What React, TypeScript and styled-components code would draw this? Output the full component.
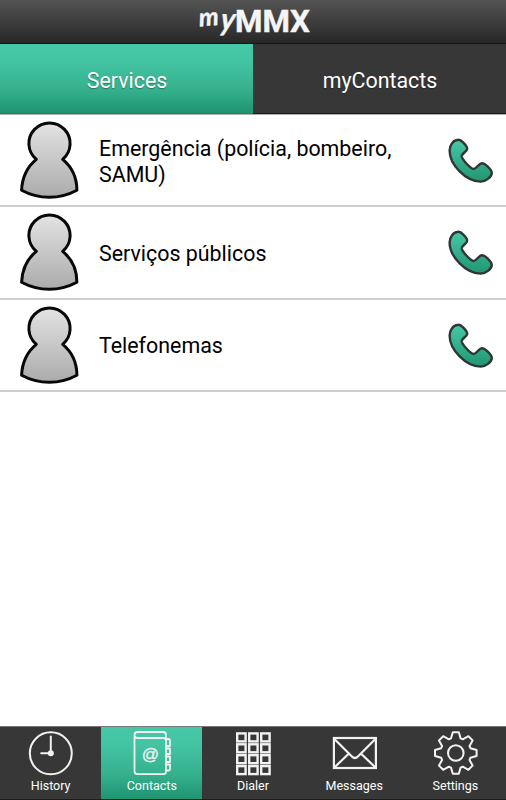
import React from "react";
import styled, { createGlobalStyle, css } from "styled-components";

const GlobalStyle = createGlobalStyle`
  * { box-sizing: border-box; }
  body { margin: 0; background: #fff; font-family: Roboto, "Liberation Sans", sans-serif; }
`;

const green = css`
  background: linear-gradient(#46c8a6 0%, #43c4a2 25%, #36b18e 65%, #1f9471 100%);
`;

const Screen = styled.div`
  display: flex;
  flex-direction: column;
  width: 100%;
  height: 800px;
  background: #fff;
  overflow: hidden;
`;

const Header = styled.header`
  display: flex;
  justify-content: center;
  height: 44px;
  flex: none;
  background: linear-gradient(#545454, #272727);
  border-bottom: 1px solid #151515;
`;

const Logo = styled.svg`
  display: block;
  width: 120px;
  height: 43px;
  overflow: visible;
`;

const Tabs = styled.nav`
  display: flex;
  height: 70px;
  flex: none;
`;

const Tab = styled.button<{ $active?: boolean }>`
  flex: 1 1 0;
  border: 0;
  border-bottom: 1px solid ${(p) => (p.$active ? "#1b8768" : "#1c1c1c")};
  padding: 3px 0 0 1px;
  font: 400 21.4px Roboto, sans-serif;
  color: #fff;
  text-shadow: 0 1px 1px rgba(0, 0, 0, 0.35);
  background: #373737;
  ${(p) => p.$active && green}
`;

const List = styled.ul`
  flex: 1;
  margin: 0;
  padding: 0;
  list-style: none;
  border-top: 1px solid #b0b0b0;
`;

const Row = styled.li`
  display: flex;
  align-items: center;
  height: 92.3px;
  padding: 0 11px 0 18px;
  border-bottom: 2px solid #cfcfcf;
`;

const Avatar = styled.svg`
  flex: none;
  width: 63px;
  height: 80px;
  margin-top: 2px;
`;

const Name = styled.span`
  flex: 1;
  margin-left: 18px;
  padding-top: 3px;
  font-size: 21.4px;
  line-height: 26px;
  color: #000;
`;

const Call = styled.svg`
  flex: none;
  width: 48px;
  height: 48px;
  margin-top: 2px;
`;

const BottomBar = styled.nav`
  display: flex;
  height: 74px;
  flex: none;
  border-top: 1px solid #777;
  border-bottom: 1px solid #1b1b1b;
  background: #373737;
`;

const BarItem = styled.button<{ $active?: boolean }>`
  flex: 1 1 0;
  display: flex;
  flex-direction: column;
  align-items: center;
  border: 0;
  padding: 3px 0 0;
  color: #fff;
  font: 400 12.5px/16px Roboto, sans-serif;
  background: transparent;
  ${(p) => p.$active && green}
`;

const BarIcon = styled.svg<{ $weight?: number; $sharp?: boolean }>`
  display: block;
  width: 48px;
  height: 46px;
  margin-bottom: 2px;
  fill: none;
  stroke: #f2f2f2;
  stroke-width: ${(p) => p.$weight ?? 2};
  stroke-linejoin: ${(p) => (p.$sharp ? "miter" : "round")};
  stroke-linecap: round;
`;

const Solid = styled.circle`
  fill: #f2f2f2;
  stroke: none;
`;

const AtSign = styled.text`
  fill: #f2f2f2;
  stroke: #f2f2f2;
  stroke-width: 0.3;
  font: 400 17px "Liberation Sans", sans-serif;
  text-anchor: middle;
`;

const gearPath = (() => {
  const points: string[] = [];
  const profile: [number, number][] = [
    [14.6, -4.8],
    [20.8, -3],
    [20.8, 3],
    [14.6, 4.8],
  ];
  for (let i = 0; i < 8; i++) {
    const a = (i * Math.PI) / 4;
    profile.forEach(([r, t]) => {
      const x = 24.8 + r * Math.cos(a) - t * Math.sin(a);
      const y = 23 + r * Math.sin(a) + t * Math.cos(a);
      points.push(`${x.toFixed(2)} ${y.toFixed(2)}`);
    });
  }
  return `M${points.join("L")}Z`;
})();

const HistoryIcon = () => (
  <BarIcon viewBox="0 0 48 46">
    <circle cx="23.8" cy="23.3" r="21" />
    <path d="M23.8 6.5V23.3H14.2" />
    <Solid cx="23.8" cy="23.3" r="3" />
  </BarIcon>
);

const ContactsIcon = () => (
  <BarIcon viewBox="0 0 48 46" $weight={1.8}>
    <path d="M6.5 5V41Q6.5 44.2 9.5 44.2H35.5Q38 44.2 38 41.5V10.5Q38 8 35.5 8H9.5Q6.5 8 6.5 5Q6.5 2 9.5 2H35.5Q38 2 38 5V9" />
    <path d="M38 9H40.5Q42 9 42 10.5V16H39M39 18.5H42V24H39M39 26.5H42V32H39M39 34.5H42V39Q42 40.5 40.5 40.5H39" />
    <AtSign x="22.3" y="30.3">@</AtSign>
  </BarIcon>
);

const DialerIcon = () => (
  <BarIcon viewBox="0 0 48 46" $weight={2.4} $sharp>
    {[0, 1, 2, 3].map((r) =>
      [0, 1, 2].map((c) => (
        <rect key={`${r}-${c}`} x={8.2 + c * 12} y={3.4 + r * 10.9} width="8.4" height="8" />
      ))
    )}
  </BarIcon>
);

const MessagesIcon = () => (
  <BarIcon viewBox="0 0 48 46" $weight={2.2} $sharp>
    <rect x="3.9" y="8" width="42" height="30" />
    <path d="M4.4 9L21.9 26.5Q24.9 29.5 27.9 26.5L45.4 9M4.9 37L18.4 24M44.9 37L31.4 24" />
  </BarIcon>
);

const SettingsIcon = () => (
  <BarIcon viewBox="0 0 48 46">
    <path d={gearPath} />
    <circle cx="24.8" cy="23" r="7.8" />
  </BarIcon>
);

const services = ["Emergência (polícia, bombeiro, SAMU)", "Serviços públicos", "Telefonemas"];

const items = [
  { label: "History", Icon: HistoryIcon },
  { label: "Contacts", Icon: ContactsIcon, active: true },
  { label: "Dialer", Icon: DialerIcon },
  { label: "Messages", Icon: MessagesIcon },
  { label: "Settings", Icon: SettingsIcon },
];

const Person = () => (
  <Avatar viewBox="0 0 63 80">
    <defs>
      <linearGradient id="person" x1="0" y1="0" x2="0" y2="1">
        <stop offset="0" stopColor="#e3e3e3" />
        <stop offset="1" stopColor="#ababab" />
      </linearGradient>
    </defs>
    <path
      d="M18.3 38.3A20.6 20.6 0 1 1 44.7 38.3C54 46 58.9 57 58.9 69.2Q46 76.2 31.3 76.2T3.6 69.2C4.1 57 9 46 18.3 38.3Z"
      fill="url(#person)"
      stroke="#080808"
      strokeWidth="3"
      strokeLinejoin="round"
    />
  </Avatar>
);

const Phone = () => (
  <Call viewBox="0 0 48 48">
    <defs>
      <linearGradient id="phone" x1="0" y1="0" x2="0" y2="1">
        <stop offset="0" stopColor="#46c8a6" />
        <stop offset="1" stopColor="#219671" />
      </linearGradient>
    </defs>
    <path
      d="M10.5 3C14 1.6 20 9 20.2 11.5C20.4 14.5 14.5 16.5 14.7 19.4C15 22.4 23.6 31.8 26.6 32C29.5 32.2 31.5 26.5 34.8 26.3C38 26.2 44.8 32.5 44.8 36C44.8 40 38.5 44.8 33.5 44.6C19 44.1 2.6 28 2.6 13.5C2.6 8 6.5 3 10.5 3Z"
      fill="url(#phone)"
      stroke="#303536"
      strokeWidth="2.4"
    />
  </Call>
);

const LogoScript = styled.text<{ $size: number }>`
  fill: #f5f5f5;
  stroke: #f5f5f5;
  stroke-width: 0.4;
  font: italic 700 ${(p) => p.$size}px Lato, sans-serif;
`;

const LogoName = styled.text`
  fill: #f5f5f5;
  stroke: #f5f5f5;
  stroke-width: 0.4;
  font: 700 30.5px Roboto, sans-serif;
`;

export default function App() {
  return (
    <Screen>
      <GlobalStyle />
      <Header>
        <Logo viewBox="0 0 120 43" role="img" aria-label="myMMX">
          <LogoScript $size={25} transform="translate(6.5 26.5) rotate(-5)">
            m
          </LogoScript>
          <LogoScript $size={31} transform="translate(26.5 30) skewX(-8) scale(0.95 1)">
            y
          </LogoScript>
          <LogoName x="42" y="31.5" textLength="75" lengthAdjust="spacingAndGlyphs">
            MMX
          </LogoName>
        </Logo>
      </Header>
      <Tabs>
        <Tab $active>Services</Tab>
        <Tab>myContacts</Tab>
      </Tabs>
      <List>
        {services.map((name) => (
          <Row key={name}>
            <Person />
            <Name>{name}</Name>
            <Phone />
          </Row>
        ))}
      </List>
      <BottomBar>
        {items.map(({ label, Icon, active }) => (
          <BarItem key={label} $active={active}>
            <Icon />
            {label}
          </BarItem>
        ))}
      </BottomBar>
    </Screen>
  );
}
